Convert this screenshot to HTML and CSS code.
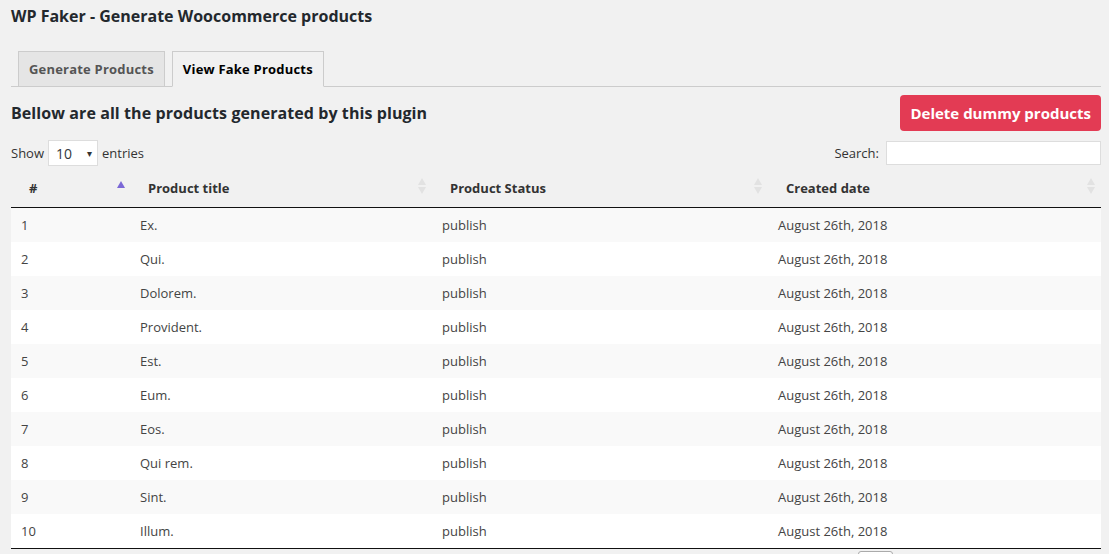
FILE: index.html
```
<!DOCTYPE html>
<html>
<head>
<meta charset="utf-8">
<link rel="stylesheet" href="styles.css">
</head>
<body>
<div class="wrap">
  <h1 class="title">WP Faker - Generate Woocommerce products</h1>
  <nav class="tabs">
    <a class="tab">Generate Products</a>
    <a class="tab tab-active">View Fake Products</a>
  </nav>
  <div class="section-head">
    <h2 class="subtitle">Bellow are all the products generated by this plugin</h2>
    <button class="btn-delete">Delete dummy products</button>
  </div>
  <div class="controls">
    <label class="length">Show
      <span class="select">10<span class="caret">&#9662;</span></span>
      entries</label>
    <label class="search">Search: <span class="search-input"></span></label>
  </div>
  <table class="data">
    <thead>
      <tr>
        <th class="c1 sort-asc">#</th>
        <th class="c2 sort-both">Product title</th>
        <th class="c3 sort-both">Product Status</th>
        <th class="c4 sort-both">Created date</th>
      </tr>
    </thead>
    <tbody>
      <tr><td>1</td><td>Ex.</td><td>publish</td><td>August 26th, 2018</td></tr>
      <tr><td>2</td><td>Qui.</td><td>publish</td><td>August 26th, 2018</td></tr>
      <tr><td>3</td><td>Dolorem.</td><td>publish</td><td>August 26th, 2018</td></tr>
      <tr><td>4</td><td>Provident.</td><td>publish</td><td>August 26th, 2018</td></tr>
      <tr><td>5</td><td>Est.</td><td>publish</td><td>August 26th, 2018</td></tr>
      <tr><td>6</td><td>Eum.</td><td>publish</td><td>August 26th, 2018</td></tr>
      <tr><td>7</td><td>Eos.</td><td>publish</td><td>August 26th, 2018</td></tr>
      <tr><td>8</td><td>Qui rem.</td><td>publish</td><td>August 26th, 2018</td></tr>
      <tr><td>9</td><td>Sint.</td><td>publish</td><td>August 26th, 2018</td></tr>
      <tr><td>10</td><td>Illum.</td><td>publish</td><td>August 26th, 2018</td></tr>
    </tbody>
  </table>
  <div class="pager">
    <span class="page-btn">1</span>
  </div>
</div>
</body>
</html>
```
FILE: styles.css
```
html, body {
  margin: 0;
  padding: 0;
  background: #f1f1f1;
}
body {
  font-family: "Open Sans", "DejaVu Sans", sans-serif;
  font-size: 13px;
  color: #444;
}
.wrap {
  padding: 0 8px 0 11px;
}
.title {
  margin: 0;
  padding-top: 5px;
  font-size: 16px;
  line-height: 22px;
  font-weight: 700;
  color: #23282d;
}
.tabs {
  display: flex;
  gap: 7px;
  margin-top: 24px;
  padding-left: 7px;
  border-bottom: 1px solid #ccc;
  height: 35px;
  align-items: flex-end;
}
.tab {
  display: block;
  box-sizing: border-box;
  height: 36px;
  margin-bottom: -1px;
  padding: 0 10px;
  line-height: 34px;
  font-size: 13px;
  letter-spacing: 0.2px;
  font-weight: 700;
  color: #555;
  background: #e5e5e5;
  border: 1px solid #ccc;
}
.tab-active {
  background: #f1f1f1;
  color: #000;
  border-bottom-color: #f1f1f1;
}
.section-head {
  display: flex;
  justify-content: space-between;
  align-items: center;
  margin-top: 8px;
}
.subtitle {
  margin: 0;
  font-size: 16px;
  letter-spacing: 0.08px;
  font-weight: 700;
  color: #23282d;
}
.btn-delete {
  height: 36px;
  padding: 0 10px;
  border: none;
  border-radius: 4px;
  background: #e33b54;
  color: #fff;
  font-family: inherit;
  font-size: 15px;
  font-weight: 700;
}
.controls {
  display: flex;
  justify-content: space-between;
  align-items: center;
  margin-top: 9px;
  height: 26px;
}
.length, .search {
  display: flex;
  align-items: center;
  gap: 4px;
  color: #333;
}
.select {
  display: flex;
  align-items: center;
  justify-content: space-between;
  box-sizing: border-box;
  width: 50px;
  height: 26px;
  padding: 0 5px 0 7px;
  background: #fff;
  border: 1px solid #ddd;
  font-size: 14px;
  color: #32373c;
}
.caret {
  font-size: 10px;
  color: #333;
}
.search-input {
  display: block;
  box-sizing: border-box;
  width: 215px;
  height: 24px;
  margin-left: 3px;
  background: #fff;
  border: 1px solid #ddd;
}
.data {
  width: 100%;
  margin-top: 4px;
  border-collapse: separate;
  border-spacing: 0;
  border-bottom: 1px solid #111;
}
.data th {
  padding: 10px 18px;
  line-height: 17px;
  text-align: left;
  font-weight: 700;
  color: #333;
  border-bottom: 1px solid #111;
  position: relative;
}
.c1 { width: 83px; }
.c2 { width: 266px; }
.c3 { width: 300px; }
.data th.sort-asc::after {
  content: "";
  position: absolute;
  right: 5px;
  top: 11px;
  border-left: 4px solid transparent;
  border-right: 4px solid transparent;
  border-bottom: 7px solid #7b68d6;
}
.data th.sort-both::before,
.data th.sort-both::after {
  content: "";
  position: absolute;
  right: 6px;
  border-left: 4px solid transparent;
  border-right: 4px solid transparent;
}
.data th.sort-both::before {
  top: 8px;
  border-bottom: 7px solid #e2e2e2;
}
.data th.sort-both::after {
  top: 17px;
  border-top: 7px solid #e2e2e2;
}
.data td {
  padding: 8px 10px;
  line-height: 18px;
  color: #444;
  background: #fff;
}
.data tbody tr:nth-child(odd) td {
  background: #f9f9f9;
}
.pager {
  display: flex;
  justify-content: flex-end;
  padding-top: 2px;
  padding-right: 208px;
}
.page-btn {
  display: block;
  box-sizing: border-box;
  min-width: 35px;
  height: 30px;
  padding-top: 6px;
  border: 1px solid #aaa;
  border-radius: 3px;
  background: linear-gradient(#fff, #dcdcdc);
  text-align: center;
  line-height: 18px;
}
```
